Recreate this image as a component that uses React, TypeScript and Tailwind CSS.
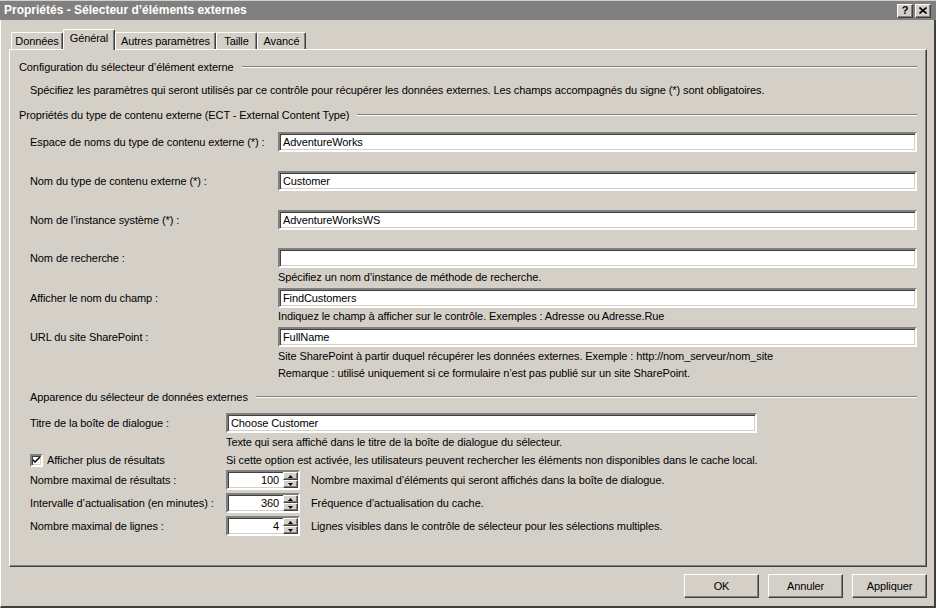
import React from "react";

const font = "[font-family:'Liberation_Sans',Arial,sans-serif]";

const sunken =
  "border-2 border-t-[#808080] border-l-[#808080] border-b-white border-r-white shadow-[inset_1px_1px_0_#404040,inset_-1px_-1px_0_#d4d0c8] bg-white";
const raised =
  "border border-t-white border-l-white border-b-[#404040] border-r-[#404040] shadow-[inset_-1px_-1px_0_#808080]";

function GroupTitle({ text, indent }: { text: string; indent?: boolean }) {
  return (
    <div className={`flex items-center h-[14px] pr-[9px] ${indent ? "pl-[11px]" : ""}`}>
      <span className="whitespace-nowrap pr-[8px]">{text}</span>
      <div className="flex-1 h-[2px] border-t border-t-[#808080] border-b border-b-white" />
    </div>
  );
}

function Field({
  label,
  value,
  className,
}: {
  label: string;
  value: string;
  className?: string;
}) {
  return (
    <div className={`flex items-center h-[20px] pl-[11px] pr-[9px] ${className ?? ""}`}>
      <span className="w-[248px] whitespace-nowrap">{label}</span>
      <div className={`flex-1 h-[20px] ${sunken} flex items-center pl-[3px]`}>
        {value}
      </div>
    </div>
  );
}

function Hint({ text, left, className }: { text: string; left: string; className?: string }) {
  return (
    <div className={`h-[14px] flex items-center whitespace-nowrap ${left} ${className ?? ""}`}>
      {text}
    </div>
  );
}

function Spinner({ value }: { value: string }) {
  return (
    <div className={`w-[74px] h-[20px] ${sunken} flex`}>
      <div className="flex-1 flex items-center justify-end pr-[4px]">{value}</div>
      <div className="w-[15px] flex flex-col bg-[#d4d0c8]">
        <div className={`flex-1 ${raised} flex items-center justify-center`}>
          <svg width="5" height="3" viewBox="0 0 5 3">
            <path d="M2.5 0 L5 3 L0 3 Z" fill="#000" />
          </svg>
        </div>
        <div className={`flex-1 ${raised} flex items-center justify-center`}>
          <svg width="5" height="3" viewBox="0 0 5 3">
            <path d="M0 0 L5 0 L2.5 3 Z" fill="#000" />
          </svg>
        </div>
      </div>
    </div>
  );
}

function SpinRow({ label, value, hint, className }: { label: string; value: string; hint: string; className?: string }) {
  return (
    <div className={`flex items-center h-[20px] pl-[11px] ${className ?? ""}`}>
      <span className="w-[196px] whitespace-nowrap">{label}</span>
      <Spinner value={value} />
      <span className="pl-[11px] whitespace-nowrap">{hint}</span>
    </div>
  );
}

function Button({ text }: { text: string }) {
  return (
    <div
      className={`w-[75px] h-[24px] flex items-center justify-center border border-t-white border-l-white border-b-[#404040] border-r-[#404040] shadow-[inset_-1px_-1px_0_#808080]`}
    >
      {text}
    </div>
  );
}

const tabs = [
  { name: "Données", w: "w-[52px]" },
  { name: "Général", w: "w-[52px]", active: true },
  { name: "Autres paramètres", w: "w-[101px]" },
  { name: "Taille", w: "w-[41px]" },
  { name: "Avancé", w: "w-[49px]" },
];

export default function App() {
  return (
    <div className={`w-[936px] h-[608px] bg-[#d4d0c8] flex flex-col text-[11px] leading-[13px] tracking-[-0.1px] text-black ${font}`}>
      {/* title bar */}
      <div className="mt-[1px] h-[19px] bg-[#808080] flex items-center pl-[4px] pr-[5px]">
        <span className="font-bold text-white text-[12px] tracking-[0px] flex-1">
          Propriétés - Sélecteur d’éléments externes
        </span>
        <div className="flex gap-[2px]">
          <div className={`w-[16px] h-[14px] bg-[#d4d0c8] ${raised} flex items-center justify-center font-bold text-[11px]`}>
            ?
          </div>
          <div className={`w-[16px] h-[14px] bg-[#d4d0c8] ${raised} flex items-center justify-center`}>
            <svg width="8" height="7" viewBox="0 0 8 7">
              <path d="M0.5 0.5 L7.5 6.5 M7.5 0.5 L0.5 6.5" stroke="#000" strokeWidth="1.6" />
            </svg>
          </div>
        </div>
      </div>

      <div className="flex-1 flex flex-col border-l border-l-white border-r-2 border-r-[#404040] border-b-2 border-b-[#404040]">
        {/* tabs */}
        <div className="mt-[9px] h-[20px] flex items-end pl-[10px]">
          {tabs.map((t) =>
            t.active ? (
              <div
                key={t.name}
                className={`${t.w} h-[21px] -mb-px relative z-10 bg-[#d4d0c8] border-t border-l border-t-white border-l-white border-r border-r-[#404040] shadow-[inset_-1px_0_0_#808080] rounded-t-[2px] flex items-start justify-center pt-[2px]`}
              >
                {t.name}
              </div>
            ) : (
              <div
                key={t.name}
                className={`${t.w} h-[17px] border-t border-l border-t-white border-l-white border-r border-r-[#404040] shadow-[inset_-1px_0_0_#808080] rounded-t-[2px] flex items-center justify-center`}
              >
                {t.name}
              </div>
            )
          )}
        </div>

        {/* panel */}
        <div className="ml-[8px] w-[918px] h-[518px] border border-t-white border-l-white border-b-[#404040] border-r-[#404040] shadow-[inset_-1px_-1px_0_#808080] flex flex-col pl-[9px]">
          <div className="mt-[10px]">
            <GroupTitle text="Configuration du sélecteur d’élément externe" />
          </div>
          <Hint
            className="mt-[9px]"
            left="pl-[11px]"
            text="Spécifiez les paramètres qui seront utilisés par ce contrôle pour récupérer les données externes. Les champs accompagnés du signe (*) sont obligatoires."
          />
          <div className="mt-[11px]">
            <GroupTitle text="Propriétés du type de contenu externe (ECT - External Content Type)" />
          </div>
          <Field className="mt-[10px]" label="Espace de noms du type de contenu externe (*) :" value="AdventureWorks" />
          <Field className="mt-[19px]" label="Nom du type de contenu externe (*) :" value="Customer" />
          <Field className="mt-[19px]" label="Nom de l’instance système (*) :" value="AdventureWorksWS" />
          <Field className="mt-[18px]" label="Nom de recherche :" value="" />
          <Hint className="mt-[2px]" left="pl-[259px]" text="Spécifiez un nom d’instance de méthode de recherche." />
          <Field className="mt-[4px]" label="Afficher le nom du champ :" value="FindCustomers" />
          <Hint className="mt-[1px]" left="pl-[259px]" text="Indiquez le champ à afficher sur le contrôle. Exemples : Adresse ou Adresse.Rue" />
          <Field className="mt-[4px]" label="URL du site SharePoint :" value="FullName" />
          <Hint className="mt-[2px]" left="pl-[259px]" text="Site SharePoint à partir duquel récupérer les données externes. Exemple : http://nom_serveur/nom_site" />
          <Hint className="mt-[3px]" left="pl-[259px]" text="Remarque : utilisé uniquement si ce formulaire n’est pas publié sur un site SharePoint." />

          <div className="mt-[10px]">
            <GroupTitle indent text="Apparence du sélecteur de données externes" />
          </div>
          <div className="mt-[9px] flex items-center h-[20px] pl-[11px]">
            <span className="w-[196px] whitespace-nowrap">Titre de la boîte de dialogue :</span>
            <div className={`w-[531px] h-[20px] ${sunken} flex items-center pl-[3px]`}>Choose Customer</div>
          </div>
          <Hint className="mt-[2px]" left="pl-[207px]" text="Texte qui sera affiché dans le titre de la boîte de dialogue du sélecteur." />
          <div className="mt-[4px] h-[14px] flex items-center pl-[11px]">
            <div className="w-[196px] flex items-center">
              <div className={`w-[13px] h-[13px] ${sunken} flex items-center justify-center`}>
                <svg width="7" height="7" viewBox="0 0 7 7">
                  <path d="M0 2 L0 4 L2 6 L7 1 L7 -1 L2 4 Z" fill="#000" />
                </svg>
              </div>
              <span className="pl-[4px] whitespace-nowrap">Afficher plus de résultats</span>
            </div>
            <span className="whitespace-nowrap">
              Si cette option est activée, les utilisateurs peuvent rechercher les éléments non disponibles dans le cache local.
            </span>
          </div>
          <SpinRow className="mt-[3px]" label="Nombre maximal de résultats :" value="100" hint="Nombre maximal d’éléments qui seront affichés dans la boîte de dialogue." />
          <SpinRow className="mt-[3px]" label="Intervalle d’actualisation (en minutes) :" value="360" hint="Fréquence d’actualisation du cache." />
          <SpinRow className="mt-[3px]" label="Nombre maximal de lignes :" value="4" hint="Lignes visibles dans le contrôle de sélecteur pour les sélections multiples." />
        </div>

        {/* footer buttons */}
        <div className="mt-[7px] flex justify-end gap-[9px] pr-[7px]">
          <Button text="OK" />
          <Button text="Annuler" />
          <Button text="Appliquer" />
        </div>
      </div>
    </div>
  );
}
